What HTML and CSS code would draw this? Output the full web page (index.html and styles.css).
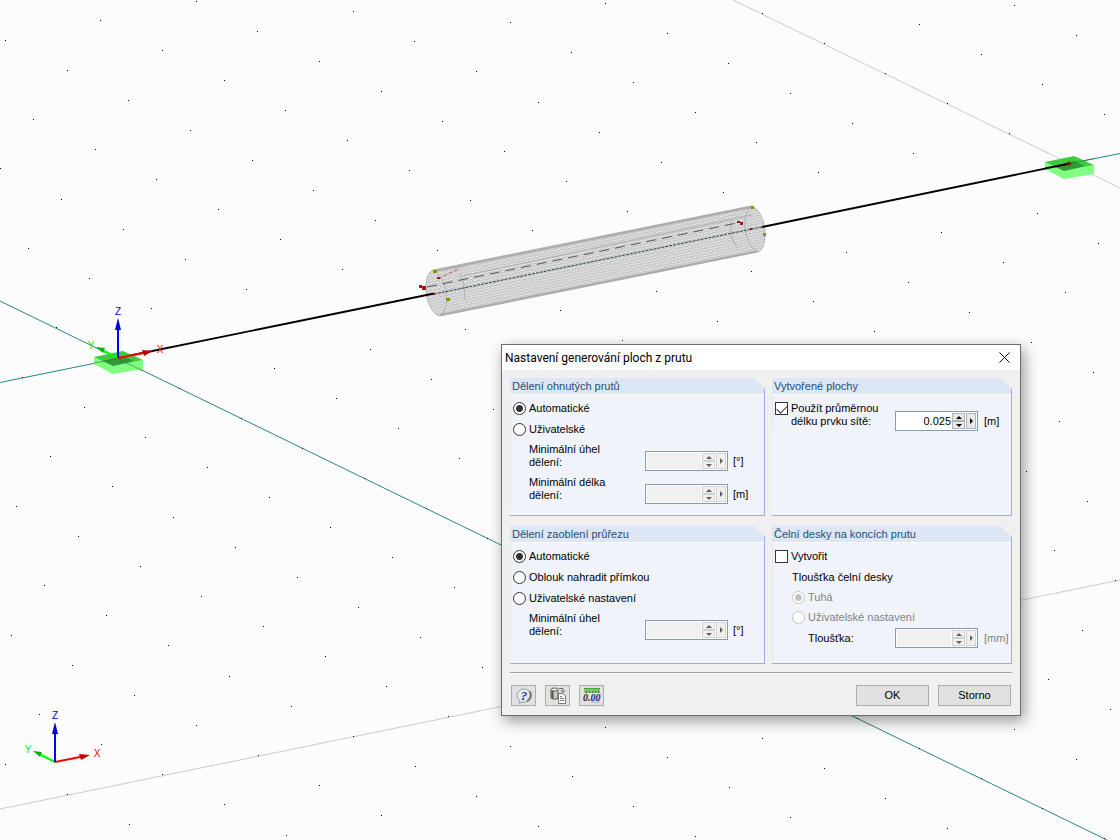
FILE: index.html
```html
<!DOCTYPE html>
<html lang="cs">
<head>
<meta charset="utf-8">
<title>Nastavení generování ploch z prutu</title>
<link rel="stylesheet" href="styles.css">
</head>
<body>
<main class="workspace">
  <svg class="scene" viewBox="0 0 1120 840" preserveAspectRatio="xMinYMin slice" role="img" aria-label="Model prutu">
    <defs>
      <pattern id="mesh" width="3.300" height="2.700" patternUnits="userSpaceOnUse" patternTransform="rotate(-11.5)">
        <path class="mesh-line" d="M0 0H3.300M0 0L1.650 2.700L3.300 0"/>
      </pattern>
      <g id="support">
        <path class="support-side" d="M94 357L113 366L143 360V369L113 374L94 364Z"/>
        <path class="support-top" d="M94 357L123 351L143 360L113 366Z"/>
        <path class="support-core" d="M103 361L123 356L134 361L113 366Z"/>
      </g>
      <g id="axes">
        <path class="axis-x" d="M0 0L30 -6"/>
        <path class="head-x" d="M24 -8L35 -7L26 -2Z"/>
        <path class="axis-y" d="M0 0L-16 -8"/>
        <path class="head-y" d="M-22 -11L-13 -10L-15 -5Z"/>
        <path class="axis-z" d="M0 0V-30"/>
        <path class="head-z" d="M0 -40L3 -28H-3Z"/>
        <text class="label-x" x="42" y="-5">X</text>
        <text class="label-y" x="-27" y="-9">Y</text>
        <text class="label-z" x="0" y="-43">Z</text>
      </g>
    </defs>

    <path class="grid-edge" d="M733 0L1120 188M0 809L1120 580"/>
    <path class="grid-axis" d="M0 301L118 358.500L1107 840M0 382.500L118 358.500M1070 163.500L1120 153.500"/>
    <path id="grid-dots" class="grid-dots" d=""/>

    <path class="tube" d="M433 270L751 206A12 23.500 -9 0 1 758 252L440 316A12 23.500 -9 0 1 433 270Z"/>
    <path class="tube-mesh" d="M433 270L751 206A12 23.500 -9 0 1 758 252L440 316A12 23.500 -9 0 1 433 270Z"/>
    <path class="tube-edge" d="M435 271L751 207M440 315L758 251"/>
    <path class="tube-inner" d="M459 273A9 19 -9 0 1 464 300M731 221A9 19 -9 0 0 738 248M462 276L752 215M433 271A12 23 -9 0 1 442 314M751 207A12 23 -9 0 0 757 251"/>
    <path class="tube-dash" d="M427 287L737 223"/>
    <path class="tube-axis" d="M434 294L762 227"/>
    <path class="member" d="M118 358L434 293.500M762 227L1070 163.500"/>
    <path class="red-dash" d="M438 279L460 268"/>
    <path class="red-mark" d="M422 286H426V290H422ZM419 285H422V288H419ZM437 277H440V279H437ZM737 221H740V223H737ZM740 222H743V225H740ZM750 228H752V230H750ZM433 293H435V295H433Z"/>
    <path class="yellow-mark" d="M433 270H437V273H433ZM446 298H450V301H446ZM751 206H754V209H751ZM763 233H766V236H763Z"/>

    <use href="#support"/>
    <use href="#support" x="951" y="-195"/>
    <path class="support-line" d="M94 363L118 358.500L143 371M1045 168.500L1070 163.500L1094 158.500"/>
    <path class="member" d="M1045 168.500L1070 163.500"/>
    <circle class="node" cx="1069" cy="163.500" r="2"/>
    <use href="#axes" x="118" y="358"/>
    <use href="#axes" x="55" y="762"/>
  </svg>

  <form class="dialog" aria-labelledby="dialog-title">
    <header class="titlebar">
      <h1 class="title" id="dialog-title">Nastavení generování ploch z prutu</h1>
      <button class="close" type="button" aria-label="Zavřít"><svg width="11" height="11" viewBox="0 0 11 11"><path d="M0.500 0.500L10.500 10.500M10.500 0.500L0.500 10.500"/></svg></button>
    </header>

    <div class="body">
      <div class="groups">
        <section class="group">
          <h2 class="group-title">Dělení ohnutých prutů</h2>
          <div class="group-body">
            <label class="option"><input type="radio" name="bent" checked>Automatické</label>
            <label class="option"><input type="radio" name="bent">Uživatelské</label>
            <div class="row">
              <label class="row-label" for="bent-angle">Minimální úhel<br>dělení:</label>
              <div class="spin disabled"><input id="bent-angle" type="text" disabled><span class="steps"><button class="up" type="button" disabled aria-label="Zvýšit"></button><button class="down" type="button" disabled aria-label="Snížit"></button></span><button class="more" type="button" disabled aria-label="Další"></button></div>
              <span class="unit">[°]</span>
            </div>
            <div class="row">
              <label class="row-label" for="bent-length">Minimální délka<br>dělení:</label>
              <div class="spin disabled"><input id="bent-length" type="text" disabled><span class="steps"><button class="up" type="button" disabled aria-label="Zvýšit"></button><button class="down" type="button" disabled aria-label="Snížit"></button></span><button class="more" type="button" disabled aria-label="Další"></button></div>
              <span class="unit">[m]</span>
            </div>
          </div>
        </section>

        <section class="group">
          <h2 class="group-title">Vytvořené plochy</h2>
          <div class="group-body">
            <div class="row mesh-row">
              <label class="option two-line" for="use-mesh"><input id="use-mesh" type="checkbox" checked><span>Použít průměrnou<br>délku prvku sítě:</span></label>
              <div class="spin"><input type="text" value="0.025" aria-label="Délka prvku sítě"><span class="steps"><button class="up" type="button" aria-label="Zvýšit"></button><button class="down" type="button" aria-label="Snížit"></button></span><button class="more" type="button" aria-label="Další"></button></div>
              <span class="unit">[m]</span>
            </div>
          </div>
        </section>

        <section class="group">
          <h2 class="group-title">Dělení zaoblení průřezu</h2>
          <div class="group-body">
            <label class="option"><input type="radio" name="round" checked>Automatické</label>
            <label class="option"><input type="radio" name="round">Oblouk nahradit přímkou</label>
            <label class="option"><input type="radio" name="round">Uživatelské nastavení</label>
            <div class="row">
              <label class="row-label" for="round-angle">Minimální úhel<br>dělení:</label>
              <div class="spin disabled"><input id="round-angle" type="text" disabled><span class="steps"><button class="up" type="button" disabled aria-label="Zvýšit"></button><button class="down" type="button" disabled aria-label="Snížit"></button></span><button class="more" type="button" disabled aria-label="Další"></button></div>
              <span class="unit">[°]</span>
            </div>
          </div>
        </section>

        <section class="group">
          <h2 class="group-title">Čelní desky na koncích prutu</h2>
          <div class="group-body">
            <label class="option"><input type="checkbox">Vytvořit</label>
            <div class="plates" role="group" aria-labelledby="plates-title">
              <p class="plates-title" id="plates-title">Tloušťka čelní desky</p>
              <label class="option short muted"><input type="radio" name="plate" checked disabled>Tuhá</label>
              <label class="option short muted"><input type="radio" name="plate" disabled>Uživatelské nastavení</label>
            </div>
            <div class="row plate-row">
              <label class="row-label" for="plate-thickness">Tloušťka:</label>
              <div class="spin disabled"><input id="plate-thickness" type="text" disabled><span class="steps"><button class="up" type="button" disabled aria-label="Zvýšit"></button><button class="down" type="button" disabled aria-label="Snížit"></button></span><button class="more" type="button" disabled aria-label="Další"></button></div>
              <span class="unit muted">[mm]</span>
            </div>
          </div>
        </section>
      </div>

      <footer class="footer">
        <button class="tool" type="button" aria-label="Nápověda">
          <svg width="18" height="16" viewBox="0 0 18 16"><path d="M9 1C13 1 16 3.500 16 7.500S13 14 9 14L4 15L5 12.500C3 11.500 2 10 2 7.500C2 3.500 5 1 9 1Z" fill="#e4e8ec" stroke="#9a9fa4"/><path d="M14.500 3Q18 9 12 13.500" fill="none" stroke="#777" stroke-width="2"/><text class="icon-help" x="9" y="12">?</text></svg>
        </button>
        <button class="tool" type="button" aria-label="Výchozí hodnoty">
          <svg width="18" height="17" viewBox="0 0 18 17"><path d="M2 2.500V11Q5.500 14 9 11V2.500Z" fill="#cdc6ba" stroke="#55504a"/><path d="M2.500 3V11L4.500 12V3Z" fill="#59534c"/><ellipse cx="5.500" cy="2.500" rx="3.500" ry="1.500" fill="#eee" stroke="#65605a"/><path d="M10 1.500H14V5M12 3.500L14 5.500L16 3.500" fill="none" stroke="#666"/><path d="M9.500 6.500H14L16.500 9V16.500H9.500Z" fill="#fff" stroke="#777"/><path d="M11 9.500H13M11 11.500H15M11 13.500H15" stroke="#777" fill="none"/></svg>
        </button>
        <button class="tool" type="button" aria-label="Jednotky a desetinná místa">
          <svg width="18" height="17" viewBox="0 0 18 17"><path d="M1 1H17V6H1Z" fill="#7cc66a"/><path d="M1 1.500H17" stroke="#4c9e43"/><path d="M3.500 4V6M6.500 4V6M9.500 4V6M12.500 4V6M15.500 4V6" stroke="#37812f"/><path d="M8 8H17V16H8Z" fill="#bcc9e8"/><text class="icon-number" x="0" y="14">0.<tspan class="icon-decimals">00</tspan></text></svg>
        </button>
        <button class="action first" type="submit">OK</button>
        <button class="action" type="button">Storno</button>
      </footer>
    </div>
  </form>
</main>
<script src="grid.js"></script>
</body>
</html>
```
FILE: styles.css
```css
* { box-sizing: border-box; }

body {
  margin: 0;
  color: #000;
  font: 11px/13px "Liberation Sans", Arial, sans-serif;
}

h1, h2, p { margin: 0; font-size: inherit; font-weight: normal; }

button, input { font: inherit; color: inherit; }

.workspace {
  position: relative;
  height: 100vh;
  overflow: hidden;
  background: #fcfcfc;
}

/* Model view */
.scene { display: block; width: 100%; height: 100%; }
.grid-edge { fill: none; stroke: #cbcbcb; }
.grid-axis { fill: none; stroke: #2a8585; }
.grid-dots { fill: #000; shape-rendering: crispEdges; }
.member { fill: none; stroke: #000; stroke-width: 1.8; }
.mesh-line { fill: none; stroke: #87878c; stroke-width: 0.5; }
.tube { fill: #f8f8f8; }
.tube-mesh { fill: url(#mesh); stroke: #b8b8bc; stroke-width: 1; }
.tube-edge { fill: none; stroke: #ababaf; stroke-width: 2; }
.tube-inner { fill: none; stroke: #b0b0b4; }
.tube-dash { fill: none; stroke: #555; stroke-dasharray: 10 6; }
.tube-axis { fill: none; stroke: #2c4646; stroke-dasharray: 3 1; }
.red-dash { fill: none; stroke: #b06060; stroke-dasharray: 4 2; }
.red-mark { fill: #a01818; }
.yellow-mark { fill: #8c8c00; }
.node { fill: #8c1010; }
.support-side { fill: #80ff80; }
.support-top { fill: #3fcb3f; }
.support-core { fill: #2f9a36; }
.support-line { fill: none; stroke: #187a30; stroke-opacity: 0.6; }
.axis-x, .axis-y, .axis-z { fill: none; stroke-width: 2; }
.axis-x { stroke: #f00; }
.axis-y { stroke: #0f0; }
.axis-z { stroke: #00f; }
.head-x { fill: #c00000; }
.head-y { fill: #00b400; }
.head-z { fill: #0000d0; }
.label-x, .label-y, .label-z { font-size: 10px; text-anchor: middle; }
.label-x { fill: #f00; }
.label-y { fill: #0e0; }
.label-z { fill: #00f; }

/* Dialog window */
.dialog {
  position: absolute;
  left: 501px;
  top: 344px;
  width: 520px;
  border: 1px solid #6c6c6c;
  background: #f0f0f0;
  box-shadow: 3px 5px 14px rgba(0, 0, 0, 0.4);
}

.titlebar {
  display: flex;
  align-items: center;
  justify-content: space-between;
  height: 25px;
  padding: 0 10px 0 3px;
  background: #fff;
}

.title { font: 12px/16px Roboto, "Open Sans", sans-serif; }

.close {
  display: flex;
  padding: 0;
  border: 0;
  background: none;
}
.close svg { fill: none; stroke: #000; }

.body { padding: 8px 8px 9px; }

.groups {
  display: grid;
  grid-template-columns: 255fr 240fr;
  gap: 10px 7px;
}

.group {
  min-height: 138px;
  border-right: 1px solid #a6a6e8;
  border-bottom: 1px solid #a6a6e8;
  background: #f0f4fa;
  clip-path: polygon(0 0, calc(100% - 11px) 0, 100% 11px, 100% 100%, 0 100%);
}

.group-title {
  height: 17px;
  padding-left: 2px;
  border-bottom: 1px solid #fff;
  background: #dce6f4;
  color: #1f4e79;
  line-height: 16px;
}

.group-body {
  padding: 3px 0 0 2px;
  border-left: 1px solid #dce6f4;
}

.option {
  display: flex;
  align-items: center;
  gap: 3px;
  height: 21px;
}
.option.short { height: 20px; }
.muted { color: #838383; }

input[type="radio"], input[type="checkbox"] {
  appearance: none;
  flex: none;
  width: 13px;
  height: 13px;
  margin: 0;
  border: 1px solid #333;
  background: #fff;
}
input[type="radio"] { border-radius: 50%; }
input[type="radio"]:checked { background: radial-gradient(circle, #333 3px, #fff 4px); }
input[type="radio"]:disabled { border-color: #c4c4c4; }
input[type="radio"]:checked:disabled { background: radial-gradient(circle, #c4c4c4 3px, #fff 4px); }
input[type="checkbox"]:checked::after {
  content: "";
  display: block;
  width: 9px;
  height: 5px;
  margin: 2px 1px;
  border: solid #333;
  border-width: 0 0 1px 1px;
  transform: rotate(-45deg);
}

.row {
  display: grid;
  grid-template-columns: 1fr 83px 31px;
  column-gap: 5px;
  padding-top: 3px;
  height: 33px;
}
.row-label { padding-left: 16px; }
.row .spin, .unit { margin-top: 8px; }
.unit { line-height: 21px; }

.mesh-row { grid-template-columns: 1fr 83px 27px; column-gap: 6px; padding-top: 4px; }
.mesh-row .spin, .mesh-row .unit { margin-top: 9px; }
.two-line { align-items: flex-start; height: 26px; }

.plates { padding-left: 17px; }
.plates-title { line-height: 20px; }
.plate-row { grid-template-columns: 1fr 83px 27px; column-gap: 6px; padding-top: 1px; }
.plate-row .spin, .plate-row .unit { margin-top: 0; }
.plate-row .row-label { padding-left: 33px; line-height: 21px; }

.spin {
  display: flex;
  gap: 1px;
  height: 20px;
  padding: 1px;
  border: 1px solid #7f9db9;
  background: #fff;
}
.spin input {
  flex: 1;
  min-width: 0;
  padding: 0;
  border: 0;
  background: none;
  text-align: right;
}
.spin.disabled input { background: #f0f0f0; }
.steps { display: flex; flex-direction: column; width: 13px; }
.steps button, .more {
  display: flex;
  align-items: center;
  justify-content: center;
  padding: 0;
  border: 1px solid #b4b4b4;
  background: #e8e8e8;
}
.steps button { flex: 1; min-height: 0; }
.more { width: 10px; }
.steps button:disabled, .more:disabled { border-color: #d2d2d2; background: #f0f0f0; color: #606060; }
.up::before, .down::before, .more::before { content: ""; border: 3px solid transparent; }
.up::before { border-top: 0; border-bottom-color: currentColor; }
.down::before { border-bottom: 0; border-top-color: currentColor; }
.more::before { border-right: 0; border-left-color: currentColor; }

.footer {
  display: flex;
  align-items: center;
  gap: 9px;
  margin-top: 8px;
  padding: 12px 1px 0;
  border-top: 1px solid #a0a0a0;
  box-shadow: inset 0 1px #fff;
}

.tool, .action {
  height: 21px;
  padding: 0;
  border: 1px solid #adadad;
  background: #e1e1e1;
}
.tool { display: flex; align-items: center; justify-content: center; width: 25px; }
.action { width: 73px; }
.first { margin-left: auto; }

.icon-help { fill: #23408e; font: italic bold 13px "Liberation Serif", serif; text-anchor: middle; }
.icon-number { fill: #222; font: italic bold 10px "Liberation Serif", serif; }
.icon-decimals { fill: #1d3485; }
```
FILE: grid.js
```javascript
// Ground grid points, projected with two constant step vectors.
const origin = [196.2, 1.2];
const right = [61.68, 30.05];
const left = [-95.31, 19.4];
let d = "";
for (let i = -10; i < 36; i++) {
  for (let j = -16; j < 22; j++) {
    const x = Math.floor(origin[0] + i * right[0] + j * left[0]);
    const y = Math.floor(origin[1] + i * right[1] + j * left[1]);
    if (x >= 0 && x < 1120 && y >= 0 && y < 840) d += `M${x} ${y}h1v1h-1z`;
  }
}
document.getElementById("grid-dots").setAttribute("d", d);
```
